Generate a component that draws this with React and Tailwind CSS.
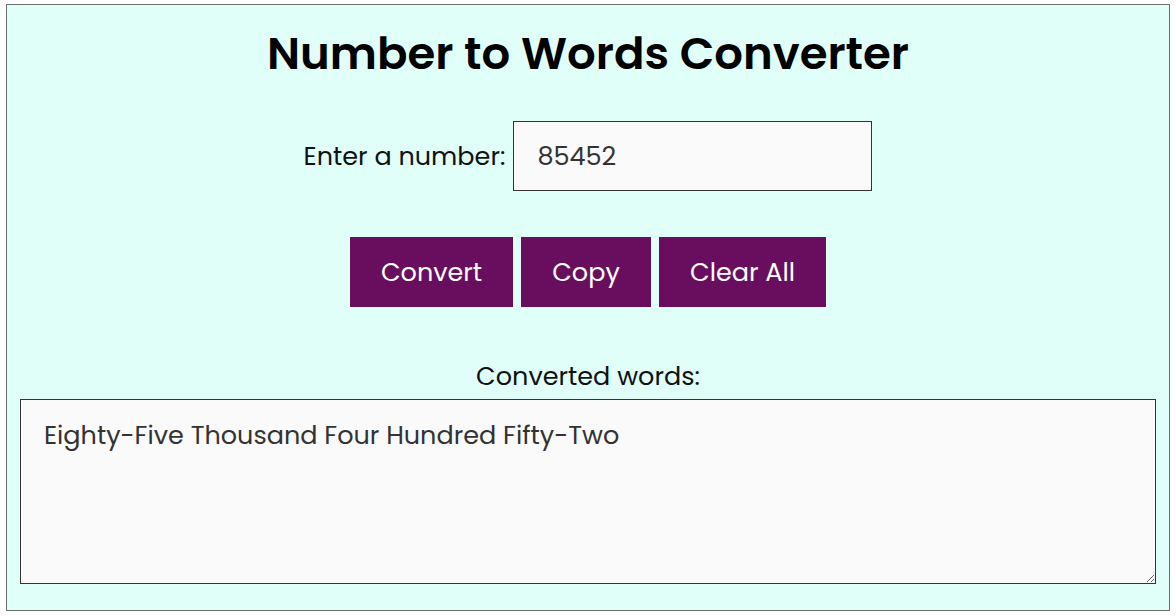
export default function App() {
  const font = { fontFamily: '"Poppins", "Inter", "Noto Sans", sans-serif' };
  return (
    <div className="pt-[4px] px-[6px] w-[1176px] h-[616px] bg-white" style={font}>
      <div className="border border-[#6f6f6f] bg-[#e0fff9] h-[607px] px-[13px] flex flex-col items-center">
        <h1 className="mt-[25px] text-[45px] leading-[48px] font-semibold text-black text-center">
          Number to Words Converter
        </h1>
        <div className="mt-[43px] flex items-center justify-center gap-[8px]">
          <label className="text-[25.5px] leading-[30px] text-[#111]">Enter a number:</label>
          <input
            className="w-[359px] h-[70px] border border-[#333] bg-[#fafafa] px-[23px] text-[25.5px] text-[#333] outline-none"
            defaultValue="85452"
            style={font}
          />
        </div>
        <div className="mt-[46px] flex gap-[8px]">
          <button className="w-[163px] h-[70px] bg-[#690e5e] text-white text-[25.5px]" style={font}>Convert</button>
          <button className="w-[130px] h-[70px] bg-[#690e5e] text-white text-[25.5px]" style={font}>Copy</button>
          <button className="w-[167px] h-[70px] bg-[#690e5e] text-white text-[25.5px]" style={font}>Clear All</button>
        </div>
        <div className="mt-[54px] text-[25.5px] leading-[30px] text-[#111]">Converted words:</div>
        <textarea
          className="mt-[8px] w-full h-[185px] border border-[#333] bg-[#fafafa] pl-[23px] pt-[17px] text-[25.5px] leading-[36px] text-[#333] outline-none"
          readOnly
          value="Eighty-Five Thousand Four Hundred Fifty-Two"
          style={font}
        />
      </div>
    </div>
  );
}
